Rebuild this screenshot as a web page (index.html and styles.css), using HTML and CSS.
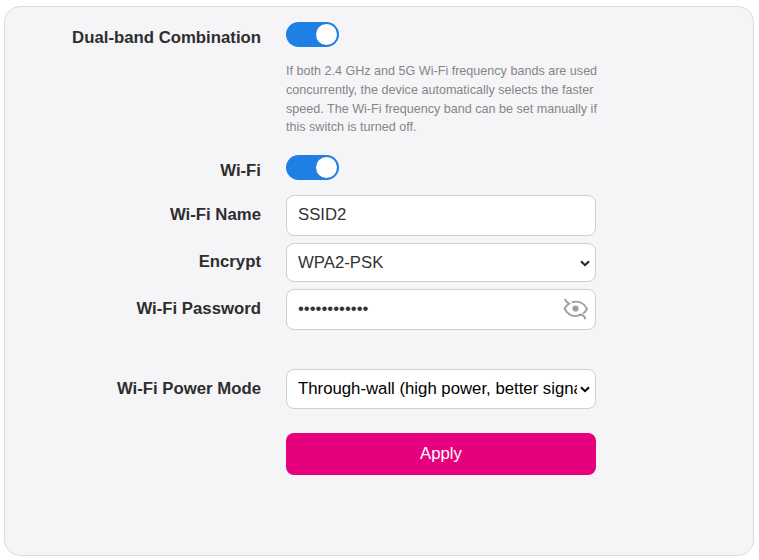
FILE: index.html
```
<!DOCTYPE html>
<html lang="en">
<head>
    <meta charset="UTF-8">
    <meta name="viewport" content="width=device-width, initial-scale=1.0">
    <title>Wi-Fi Settings</title>
    <link rel="stylesheet" href="styles.css">
</head>
<body>

    <form class="panel">
        <div class="row bandRow">
            <label for="dualBand">Dual-band Combination</label>
            <div class="field">
                <input type="checkbox" class="switch" id="dualBand" checked>
                <p class="hint">If both 2.4 GHz and 5G Wi-Fi frequency bands are used concurrently, the device automatically selects the faster speed. The Wi-Fi frequency band can be set manually if this switch is turned off.</p>
            </div>
        </div>

        <div class="row wifiRow">
            <label for="wifi">Wi-Fi</label>
            <div class="field">
                <input type="checkbox" class="switch" id="wifi" checked>
            </div>
        </div>

        <div class="row nameRow">
            <label for="ssid">Wi-Fi Name</label>
            <input type="text" class="control" id="ssid" value="SSID2">
        </div>

        <div class="row encryptRow">
            <label for="encrypt">Encrypt</label>
            <div class="selectBox">
                <select class="control" id="encrypt">
                    <option>WPA2-PSK</option>
                </select>
                <svg class="arrow" viewBox="0 0 10 7" width="10" height="7"><path d="M1 1.2L5 5.2L9 1.2"/></svg>
            </div>
        </div>

        <div class="row passwordRow">
            <label for="password">Wi-Fi Password</label>
            <div class="control passwordBox">
                <input type="password" id="password" value="abcdefghijkl">
                <svg class="eye" viewBox="0 0 26 24" width="26" height="24">
                    <path d="M2 1.8L3 4.2L6.2 6.6C4 7.8 2.4 9.4 1.6 11.6C4 16.6 8 19 12.5 19C14.6 19 16.4 18.4 18 17.4L21.4 19.6L22.4 22.2M8.8 5.3C15.2 3.4 21 6 24 11.6C23.2 13.6 22 15.2 20 16.7"/>
                    <circle cx="12.5" cy="11.5" r="3.1"/>
                </svg>
            </div>
        </div>

        <div class="row powerRow">
            <label for="power">Wi-Fi Power Mode</label>
            <div class="selectBox">
                <select class="control" id="power">
                    <option>Through-wall (high power, better signal)</option>
                </select>
                <svg class="arrow" viewBox="0 0 10 7" width="10" height="7"><path d="M1 1.2L5 5.2L9 1.2"/></svg>
            </div>
        </div>

        <button type="button" class="apply">Apply</button>
    </form>

</body>
</html>
```
FILE: styles.css
```
* {
    box-sizing: border-box;
    margin: 0;
    padding: 0;
}

body {
    background-color: white;
    font-family: "Liberation Sans", Arial, sans-serif;
    font-size: 16.75px;
    color: #2e2e2e;
}

.panel {
    width: 750px;
    height: 550px;
    margin: 6px 0 0 4px;
    padding-top: 15px;
    background-color: #f5f5f8;
    border: 1px solid #dcdcdc;
    border-radius: 16px;
}

.row {
    display: grid;
    grid-template-columns: 256px 310px;
    column-gap: 25px;
}

.row label {
    font-weight: bold;
    line-height: 20px;
    text-align: right;
    padding-top: 10px;
}

.bandRow {
    height: 133px;
}

.bandRow label {
    padding-top: 6px;
}

.wifiRow {
    height: 40px;
}

.wifiRow label {
    padding-top: 6px;
}

.switch {
    appearance: none;
    display: flex;
    justify-content: flex-end;
    width: 53px;
    height: 25px;
    padding: 2px;
    background-color: #1e7fe4;
    border-radius: 13px;
}

.switch::before {
    content: "";
    width: 21px;
    height: 21px;
    background-color: white;
    border-radius: 50%;
}

.hint {
    width: 316px;
    margin-top: 15px;
    font-size: 12.58px;
    line-height: 18.8px;
    color: #858585;
}

.control {
    width: 310px;
    height: 41px;
    padding-left: 11px;
    padding-bottom: 2px;
    background-color: white;
    border: 1px solid #cfcfd2;
    border-radius: 8px;
    font: inherit;
    color: #333;
}

.nameRow {
    height: 48px;
}

.encryptRow {
    height: 46px;
}

.encryptRow label {
    padding-top: 9px;
}

.selectBox {
    position: relative;
}

.selectBox .control {
    appearance: none;
    padding-right: 18px;
}

.arrow {
    position: absolute;
    top: 17px;
    right: 6px;
    fill: none;
    stroke: #222;
    stroke-width: 2;
    pointer-events: none;
}

.encryptRow .control {
    height: 39px;
    padding-bottom: 0;
}

.passwordRow {
    height: 80px;
}

.passwordBox {
    display: flex;
    align-items: center;
    justify-content: space-between;
    padding-right: 6px;
    padding-bottom: 1px;
}

.passwordBox input {
    width: 240px;
    padding-bottom: 1px;
    border: none;
    outline: none;
    font: inherit;
    color: #333;
}

.eye {
    fill: none;
    stroke: #a0a0a0;
    stroke-width: 2;
}

.eye circle {
    fill: #a0a0a0;
    stroke: none;
}

.powerRow .control {
    height: 40px;
    color: black;
}

.powerRow .arrow {
    stroke: black;
}

.apply {
    display: block;
    width: 310px;
    height: 42px;
    margin: 24px 0 0 281px;
    background-color: #e6007e;
    border: none;
    border-radius: 8px;
    font: inherit;
    color: white;
}
```
